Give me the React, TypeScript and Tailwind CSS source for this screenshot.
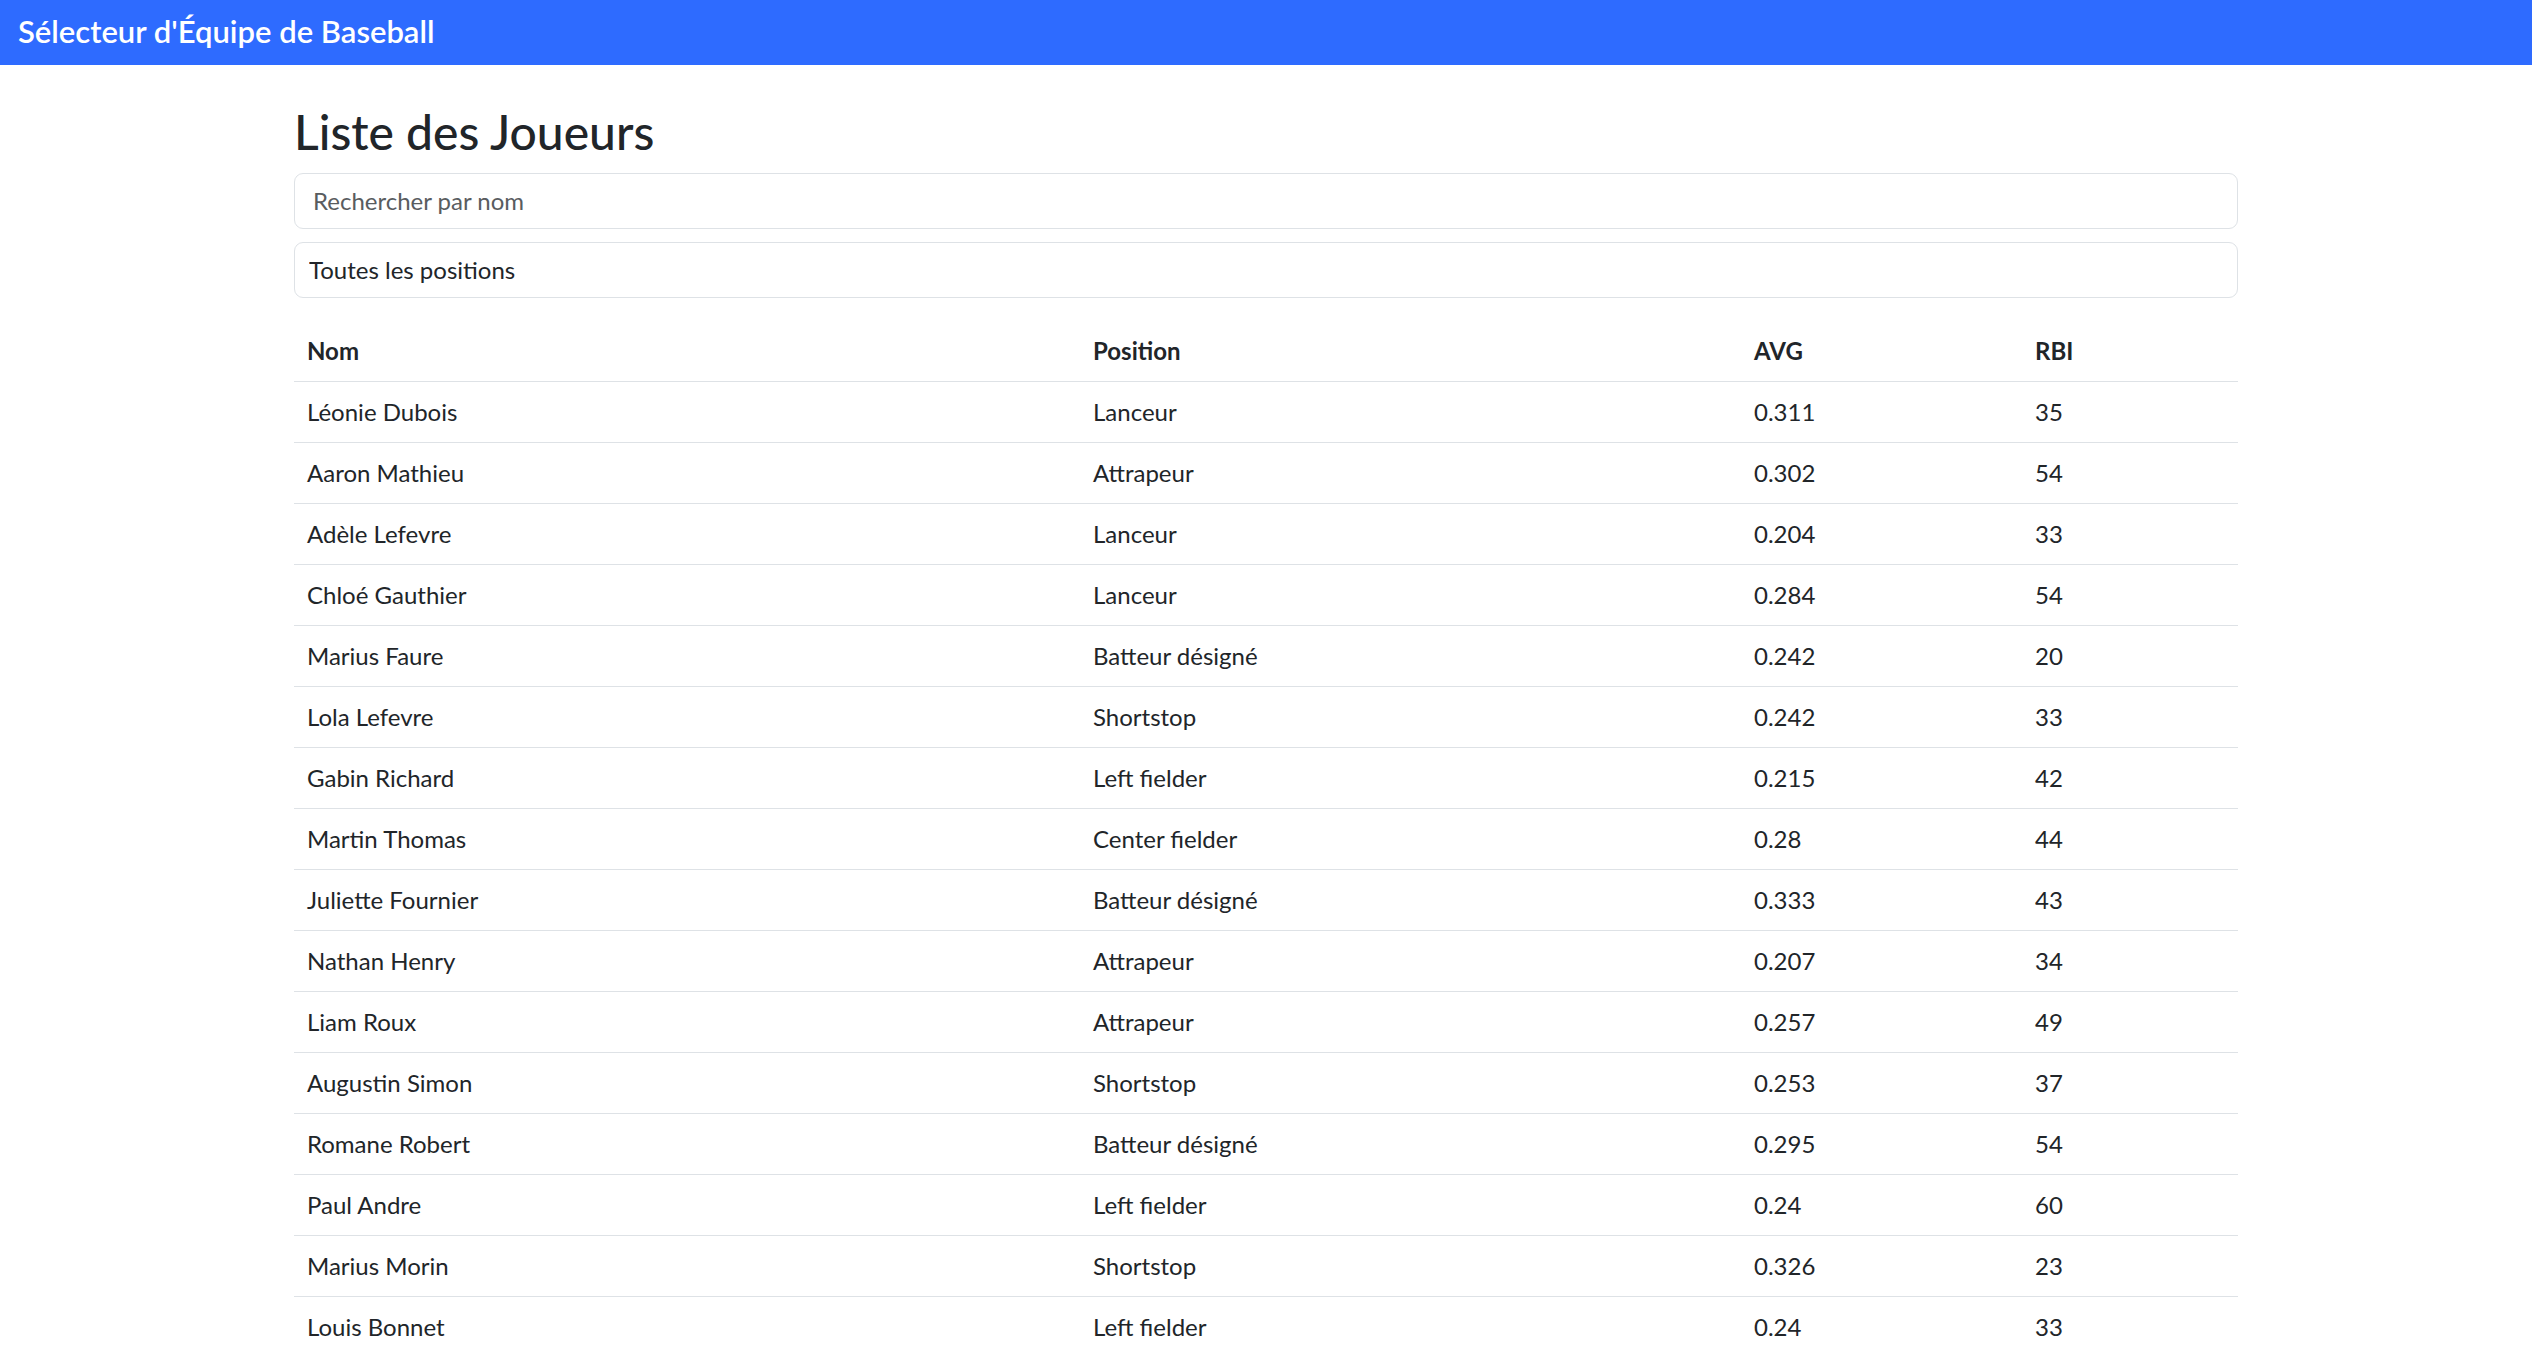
const players = [
  { name: "Léonie Dubois", position: "Lanceur", avg: "0.311", rbi: 35 },
  { name: "Aaron Mathieu", position: "Attrapeur", avg: "0.302", rbi: 54 },
  { name: "Adèle Lefevre", position: "Lanceur", avg: "0.204", rbi: 33 },
  { name: "Chloé Gauthier", position: "Lanceur", avg: "0.284", rbi: 54 },
  { name: "Marius Faure", position: "Batteur désigné", avg: "0.242", rbi: 20 },
  { name: "Lola Lefevre", position: "Shortstop", avg: "0.242", rbi: 33 },
  { name: "Gabin Richard", position: "Left fielder", avg: "0.215", rbi: 42 },
  { name: "Martin Thomas", position: "Center fielder", avg: "0.28", rbi: 44 },
  { name: "Juliette Fournier", position: "Batteur désigné", avg: "0.333", rbi: 43 },
  { name: "Nathan Henry", position: "Attrapeur", avg: "0.207", rbi: 34 },
  { name: "Liam Roux", position: "Attrapeur", avg: "0.257", rbi: 49 },
  { name: "Augustin Simon", position: "Shortstop", avg: "0.253", rbi: 37 },
  { name: "Romane Robert", position: "Batteur désigné", avg: "0.295", rbi: 54 },
  { name: "Paul Andre", position: "Left fielder", avg: "0.24", rbi: 60 },
  { name: "Marius Morin", position: "Shortstop", avg: "0.326", rbi: 23 },
  { name: "Louis Bonnet", position: "Left fielder", avg: "0.24", rbi: 33 },
];

export default function App() {
  return (
    <div className="min-h-screen bg-white text-[#212529] font-['Segoe_UI','Lato','Noto_Sans',sans-serif]">
      <nav className="h-[65px] bg-[#2e6bff] flex items-center px-[18px] pb-[2px]">
        <span className="text-white text-[31px] font-semibold leading-none">
          Sélecteur d'Équipe de Baseball
        </span>
      </nav>

      <main className="max-w-[1980px] mx-auto px-[18px]">
        <h2 className="text-[48px] font-medium leading-[1.2] mt-[38px] mb-[12px]">Liste des Joueurs</h2>

        <input
          type="text"
          placeholder="Rechercher par nom"
          className="block w-full h-[56px] px-[18px] text-[24px] border border-[#dee2e6] rounded-[9px] placeholder:text-[#595c5f] outline-none mb-[13px]"
        />

        <select className="block w-full h-[56px] px-[14px] text-[24px] border border-[#dee2e6] rounded-[9px] appearance-none bg-white outline-none mb-[23px]">
          <option>Toutes les positions</option>
        </select>

        <table className="w-full table-fixed text-[24px] border-collapse">
          <thead>
            <tr className="border-b-[1.5px] border-[#dee2e6]">
              <th className="w-[786px] text-left font-bold px-[13px] h-[61px]">Nom</th>
              <th className="w-[661px] text-left font-bold px-[13px] h-[61px]">Position</th>
              <th className="w-[281px] text-left font-bold px-[13px] h-[61px]">AVG</th>
              <th className="text-left font-bold px-[13px] h-[61px]">RBI</th>
            </tr>
          </thead>
          <tbody>
            {players.map((p) => (
              <tr key={p.name} className="border-b-[1.5px] border-[#dee2e6]">
                <td className="px-[13px] h-[61px]">{p.name}</td>
                <td className="px-[13px] h-[61px]">{p.position}</td>
                <td className="px-[13px] h-[61px]">{p.avg}</td>
                <td className="px-[13px] h-[61px]">{p.rbi}</td>
              </tr>
            ))}
          </tbody>
        </table>
      </main>
    </div>
  );
}
